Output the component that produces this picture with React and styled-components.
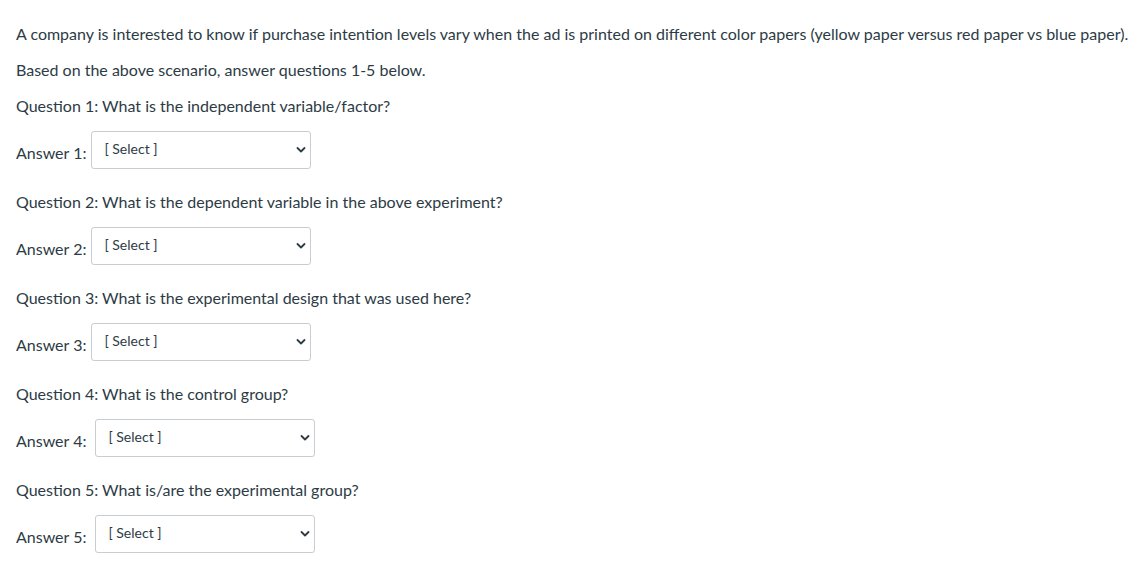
import React from "react";
import styled, { createGlobalStyle } from "styled-components";

const Global = createGlobalStyle`
  html, body { margin: 0; padding: 0; background: #fff; }
  body { font-family: Lato, "Helvetica Neue", Arial, sans-serif; color: #2D3B45; }
`;

const Page = styled.div`
  padding: 22px 16px 0 16px;
  font-size: 16px;
  line-height: 24px;
`;

const Para = styled.p`
  margin: 0 0 12px 0;
`;

const AnswerRow = styled.div`
  display: flex;
  align-items: flex-end;
  padding-top: 1px;
  margin: 0 0 21px 0;
`;

const Label = styled.span`
  margin-right: ${(p) => p.$gap}px;
  margin-bottom: 4px;
`;

const SelectBox = styled.div`
  position: relative;
  display: inline-flex;
  align-items: center;
  box-sizing: border-box;
  width: 220px;
  height: 38px;
  border: 1px solid #C7CDD1;
  border-radius: 3px;
  background: #fff;
  padding: 0 12px 2px 12px;
  font-size: 14px;
  line-height: 20px;
  color: #2D3B45;
`;

const Chevron = styled.svg`
  position: absolute;
  right: 4px;
  top: 14px;
  width: 10px;
  height: 8px;
`;

const questions = [
  { q: "Question 1: What is the independent variable/factor?", a: "Answer 1:", gap: 5 },
  { q: "Question 2: What is the dependent variable in the above experiment?", a: "Answer 2:", gap: 5 },
  { q: "Question 3: What is the experimental design that was used here?", a: "Answer 3:", gap: 5 },
  { q: "Question 4: What is the control group?", a: "Answer 4:", gap: 9 },
  { q: "Question 5: What is/are the experimental group?", a: "Answer 5:", gap: 9 },
];

export default function App() {
  return (
    <>
      <Global />
      <Page>
        <Para>
          A company is interested to know if purchase intention levels vary when the ad is printed on different color papers (yellow paper versus red paper vs blue paper).
        </Para>
        <Para>Based on the above scenario, answer questions 1-5 below.</Para>
        {questions.map((item) => (
          <React.Fragment key={item.a}>
            <Para>{item.q}</Para>
            <AnswerRow>
              <Label $gap={item.gap}>{item.a}</Label>
              <SelectBox>
                [ Select ]
                <Chevron viewBox="0 0 10 8">
                  <path d="M1.5 2 L5 5.5 L8.5 2" fill="none" stroke="#2D3B45" strokeWidth="1.8" strokeLinecap="round" strokeLinejoin="round" />
                </Chevron>
              </SelectBox>
            </AnswerRow>
          </React.Fragment>
        ))}
      </Page>
    </>
  );
}
